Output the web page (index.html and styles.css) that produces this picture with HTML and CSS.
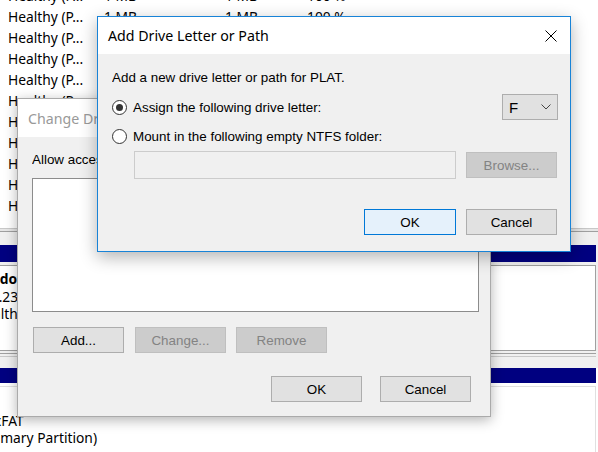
FILE: index.html
```html
<!DOCTYPE html>
<html>
<head>
<meta charset="utf-8">
<link rel="stylesheet" href="styles.css">
</head>
<body>
<div class="screen">
  <div class="volumes">
    <div class="vrow"><span class="c-status">Healthy (P...</span><span class="c-cap">1 MB</span><span class="c-free">1 MB</span><span class="c-pct">100 %</span></div>
    <div class="vrow"><span class="c-status">Healthy (P...</span><span class="c-cap">1 MB</span><span class="c-free">1 MB</span><span class="c-pct">100 %</span></div>
    <div class="vrow"><span class="c-status">Healthy (P...</span><span class="c-cap">1 MB</span><span class="c-free">1 MB</span><span class="c-pct">100 %</span></div>
    <div class="vrow"><span class="c-status">Healthy (P...</span><span class="c-cap">1 MB</span><span class="c-free">1 MB</span><span class="c-pct">100 %</span></div>
    <div class="vrow"><span class="c-status">Healthy (P...</span><span class="c-cap">1 MB</span><span class="c-free">1 MB</span><span class="c-pct">100 %</span></div>
    <div class="vrow"><span class="c-status">Healthy (P...</span><span class="c-cap">1 MB</span><span class="c-free">1 MB</span><span class="c-pct">100 %</span></div>
    <div class="vrow"><span class="c-status">Healthy (P...</span><span class="c-cap">1 MB</span><span class="c-free">1 MB</span><span class="c-pct">100 %</span></div>
    <div class="vrow"><span class="c-status">Healthy (P...</span><span class="c-cap">1 MB</span><span class="c-free">1 MB</span><span class="c-pct">100 %</span></div>
    <div class="vrow"><span class="c-status">Healthy (P...</span><span class="c-cap">1 MB</span><span class="c-free">1 MB</span><span class="c-pct">100 %</span></div>
    <div class="vrow"><span class="c-status">Healthy (P...</span><span class="c-cap">1 MB</span><span class="c-free">1 MB</span><span class="c-pct">100 %</span></div>
    <div class="vrow"><span class="c-status">Healthy (P...</span><span class="c-cap">1 MB</span><span class="c-free">1 MB</span><span class="c-pct">100 %</span></div>
  </div>
  <div class="divider"></div>
  <div class="disk disk1">
    <div class="part part1">
      <div class="part-bar"></div>
      <div class="part-body">
        <div class="pline bold">Shadow (D:)</div>
        <div class="pline">931.23 GB NTFS</div>
        <div class="pline">Healthy (Primary Partition)</div>
      </div>
    </div>
  </div>
  <div class="disk disk2">
    <div class="part part2">
      <div class="part-bar"></div>
      <div class="part-body">
        <div class="pline bold">PLAT</div>
        <div class="pline">14.84 GB exFAT</div>
        <div class="pline">Healthy (Primary Partition)</div>
      </div>
    </div>
  </div>

  <div class="dlg back">
    <div class="titlebar"><span class="title">Change Drive Letter and Paths for PLAT</span></div>
    <div class="body back-body">
      <div class="label">Allow access to this volume by using the following drive letter and paths:</div>
      <div class="listbox"></div>
      <div class="btnrow">
        <div class="btn">Add...</div>
        <div class="btn disabled">Change...</div>
        <div class="btn disabled">Remove</div>
      </div>
      <div class="btnrow end">
        <div class="btn">OK</div>
        <div class="btn">Cancel</div>
      </div>
    </div>
  </div>

  <div class="dlg front">
    <div class="titlebar">
      <span class="title">Add Drive Letter or Path</span>
      <span class="close"><svg width="12" height="12" viewBox="0 0 12 12"><path d="M0.5 0.5 L11.5 11.5 M11.5 0.5 L0.5 11.5" stroke="#000" stroke-width="1" fill="none"/></svg></span>
    </div>
    <div class="body front-body">
      <div class="label">Add a new drive letter or path for PLAT.</div>
      <div class="row row-assign">
        <div class="opt"><span class="radio on"></span><span>Assign the following drive letter:</span></div>
        <div class="combo"><span>F</span><svg width="10" height="6" viewBox="0 0 10 6"><path d="M0.5 0.5 L5 5 L9.5 0.5" stroke="#444" stroke-width="1" fill="none"/></svg></div>
      </div>
      <div class="row row-mount">
        <div class="opt"><span class="radio"></span><span>Mount in the following empty NTFS folder:</span></div>
      </div>
      <div class="row row-path">
        <div class="pathbox"></div>
        <div class="btn disabled">Browse...</div>
      </div>
      <div class="btnrow end front-actions">
        <div class="btn default">OK</div>
        <div class="btn">Cancel</div>
      </div>
    </div>
  </div>
</div>
</body>
</html>
```

FILE: styles.css
```css
* { box-sizing: border-box; }
html, body { margin: 0; padding: 0; }
body {
  width: 598px;
  height: 452px;
  overflow: hidden;
  background: #fff;
  color: #000;
  font-family: "Noto Sans", "Liberation Sans", sans-serif;
}
.screen {
  position: relative;
  width: 598px;
  height: 452px;
  overflow: hidden;
  background: #fff;
}

/* background: volume list */
.volumes { margin-top: -15px; }
.vrow {
  display: flex;
  align-items: center;
  height: 21px;
  font-size: 13.8px;
  white-space: nowrap;
}
.c-status { width: 104px; padding-left: 8px; }
.c-cap { width: 121px; }
.c-free { width: 82px; }
.c-pct { width: 80px; }

.divider {
  height: 29px;
  background: linear-gradient(to bottom, #ffffff 0 12px, #c8c8c8 12px 13px, #e6e6e6 13px 15px, #a0a0a0 15px 16px, #f0f0f0 16px 29px);
}

/* background: disk graphical view */
.disk { display: flex; background: #f0f0f0; overflow: hidden; }
.disk1 { height: 123px; }
.disk1 .part {
  margin-left: -40px;
  padding-bottom: 17px;
  background: linear-gradient(to bottom, transparent 0 108px, #a0a0a0 108px 109px, #f0f0f0 109px 111px, #c8c8c8 111px 112px, #f0f0f0 112px);
}
.disk2 { height: 90px; background: #fff; }
.part {
  flex: 1;
  margin-right: 2px;
  display: flex;
  flex-direction: column;
}
.part-bar { height: 17px; background: #000080; }
.part-body {
  background: #fff;
  border: 1px solid #a0a0a0;
  font-size: 13.8px;
  white-space: nowrap;
  padding-left: 14px;
}
.part1 .part-body { margin-top: 3px; height: 86px; padding-top: 4px; }
.part2 { margin-left: -90px; }
.part2 .part-body { margin-top: 3px; padding-top: 7px; border-color: #e0e0e0; height: 80px; }
.pline { line-height: 17.6px; }
.bold { font-weight: bold; }

/* dialogs (windows on the desktop) */
.dlg {
  position: absolute;
  display: flex;
  flex-direction: column;
  background: #f0f0f0;
  font-family: "Liberation Sans", Arial, sans-serif;
  font-size: 13.4px;
}
.back {
  left: 17px;
  top: 98px;
  width: 474px;
  height: 319px;
  border: 1px solid #aaaaaa;
  box-shadow: 0 3px 12px rgba(0, 0, 0, 0.3);
}
.front {
  left: 97px;
  top: 16px;
  width: 474px;
  height: 236px;
  border: 1px solid #1883d7;
  box-shadow: 0 5px 16px rgba(0, 0, 0, 0.3);
}
.titlebar {
  display: flex;
  align-items: center;
  background: #fff;
  padding-left: 10px;
  flex: none;
  white-space: nowrap;
  overflow: hidden;
}
.back .titlebar { height: 38px; }
.front .titlebar { height: 37px; }
.title {
  font-family: "Noto Sans", "Liberation Sans", sans-serif;
  font-size: 14.2px;
  flex: 1;
}
.back .title { color: #999999; }
.close {
  width: 38px;
  height: 37px;
  display: flex;
  align-items: center;
  justify-content: center;
}
.close svg { display: block; }

.body { display: flex; flex-direction: column; flex: 1; }
.label { line-height: 16px; white-space: nowrap; overflow: hidden; }

.back-body { padding: 15px 11px 0 14px; }
.listbox {
  margin-top: 10px;
  height: 134px;
  background: #fff;
  border: 1px solid #8c8c8c;
}
.btnrow { display: flex; }
.back-body .btnrow { margin-top: 15px; padding-left: 1px; gap: 11px; }
.back-body .btnrow .btn + .btn.disabled + .btn.disabled { margin-left: -1px; }
.back-body .btnrow.end { margin-top: 23px; gap: 18px; padding-right: 8px; }
.btnrow.end { justify-content: flex-end; }

.btn {
  width: 91px;
  height: 26px;
  display: flex;
  align-items: center;
  justify-content: center;
  background: #e1e1e1;
  border: 1px solid #adadad;
  color: #000;
  white-space: nowrap;
  flex: none;
}
.btn.disabled {
  background: #cccccc;
  border-color: #bfbfbf;
  color: #838383;
}
.btn.default {
  background: #e5f1fb;
  border-color: #0078d7;
}

.front-body { padding: 16px 12px 0 14px; }
.row { display: flex; align-items: center; }
.row-assign { margin-top: 8px; justify-content: space-between; height: 26px; }
.row-mount { margin-top: 8px; height: 16px; }
.row-path { margin-top: 7px; padding-left: 22px; gap: 10px; padding-right: 1px; }
.opt { display: flex; align-items: center; gap: 6px; white-space: nowrap; }
.radio {
  width: 15px;
  height: 15px;
  border: 1px solid #333;
  border-radius: 50%;
  background: #fff;
  display: flex;
  align-items: center;
  justify-content: center;
  flex: none;
}
.radio.on::after {
  content: "";
  width: 7px;
  height: 7px;
  border-radius: 50%;
  background: #333;
}
.combo {
  width: 56px;
  height: 26px;
  background: #e1e1e1;
  border: 1px solid #adadad;
  display: flex;
  align-items: center;
  justify-content: space-between;
  padding: 0 6px 0 6px;
  font-size: 15px;
}
.combo svg { display: block; }
.pathbox {
  width: 322px;
  height: 28px;
  background: #f0f0f0;
  border: 1px solid #cccccc;
}
.row-path .btn { height: 26px; }
.front-actions { margin-top: 30px; gap: 10px; padding-right: 1px; }
.front-actions .btn { width: 92px; }
.front-actions .btn + .btn { width: 91px; }
```
